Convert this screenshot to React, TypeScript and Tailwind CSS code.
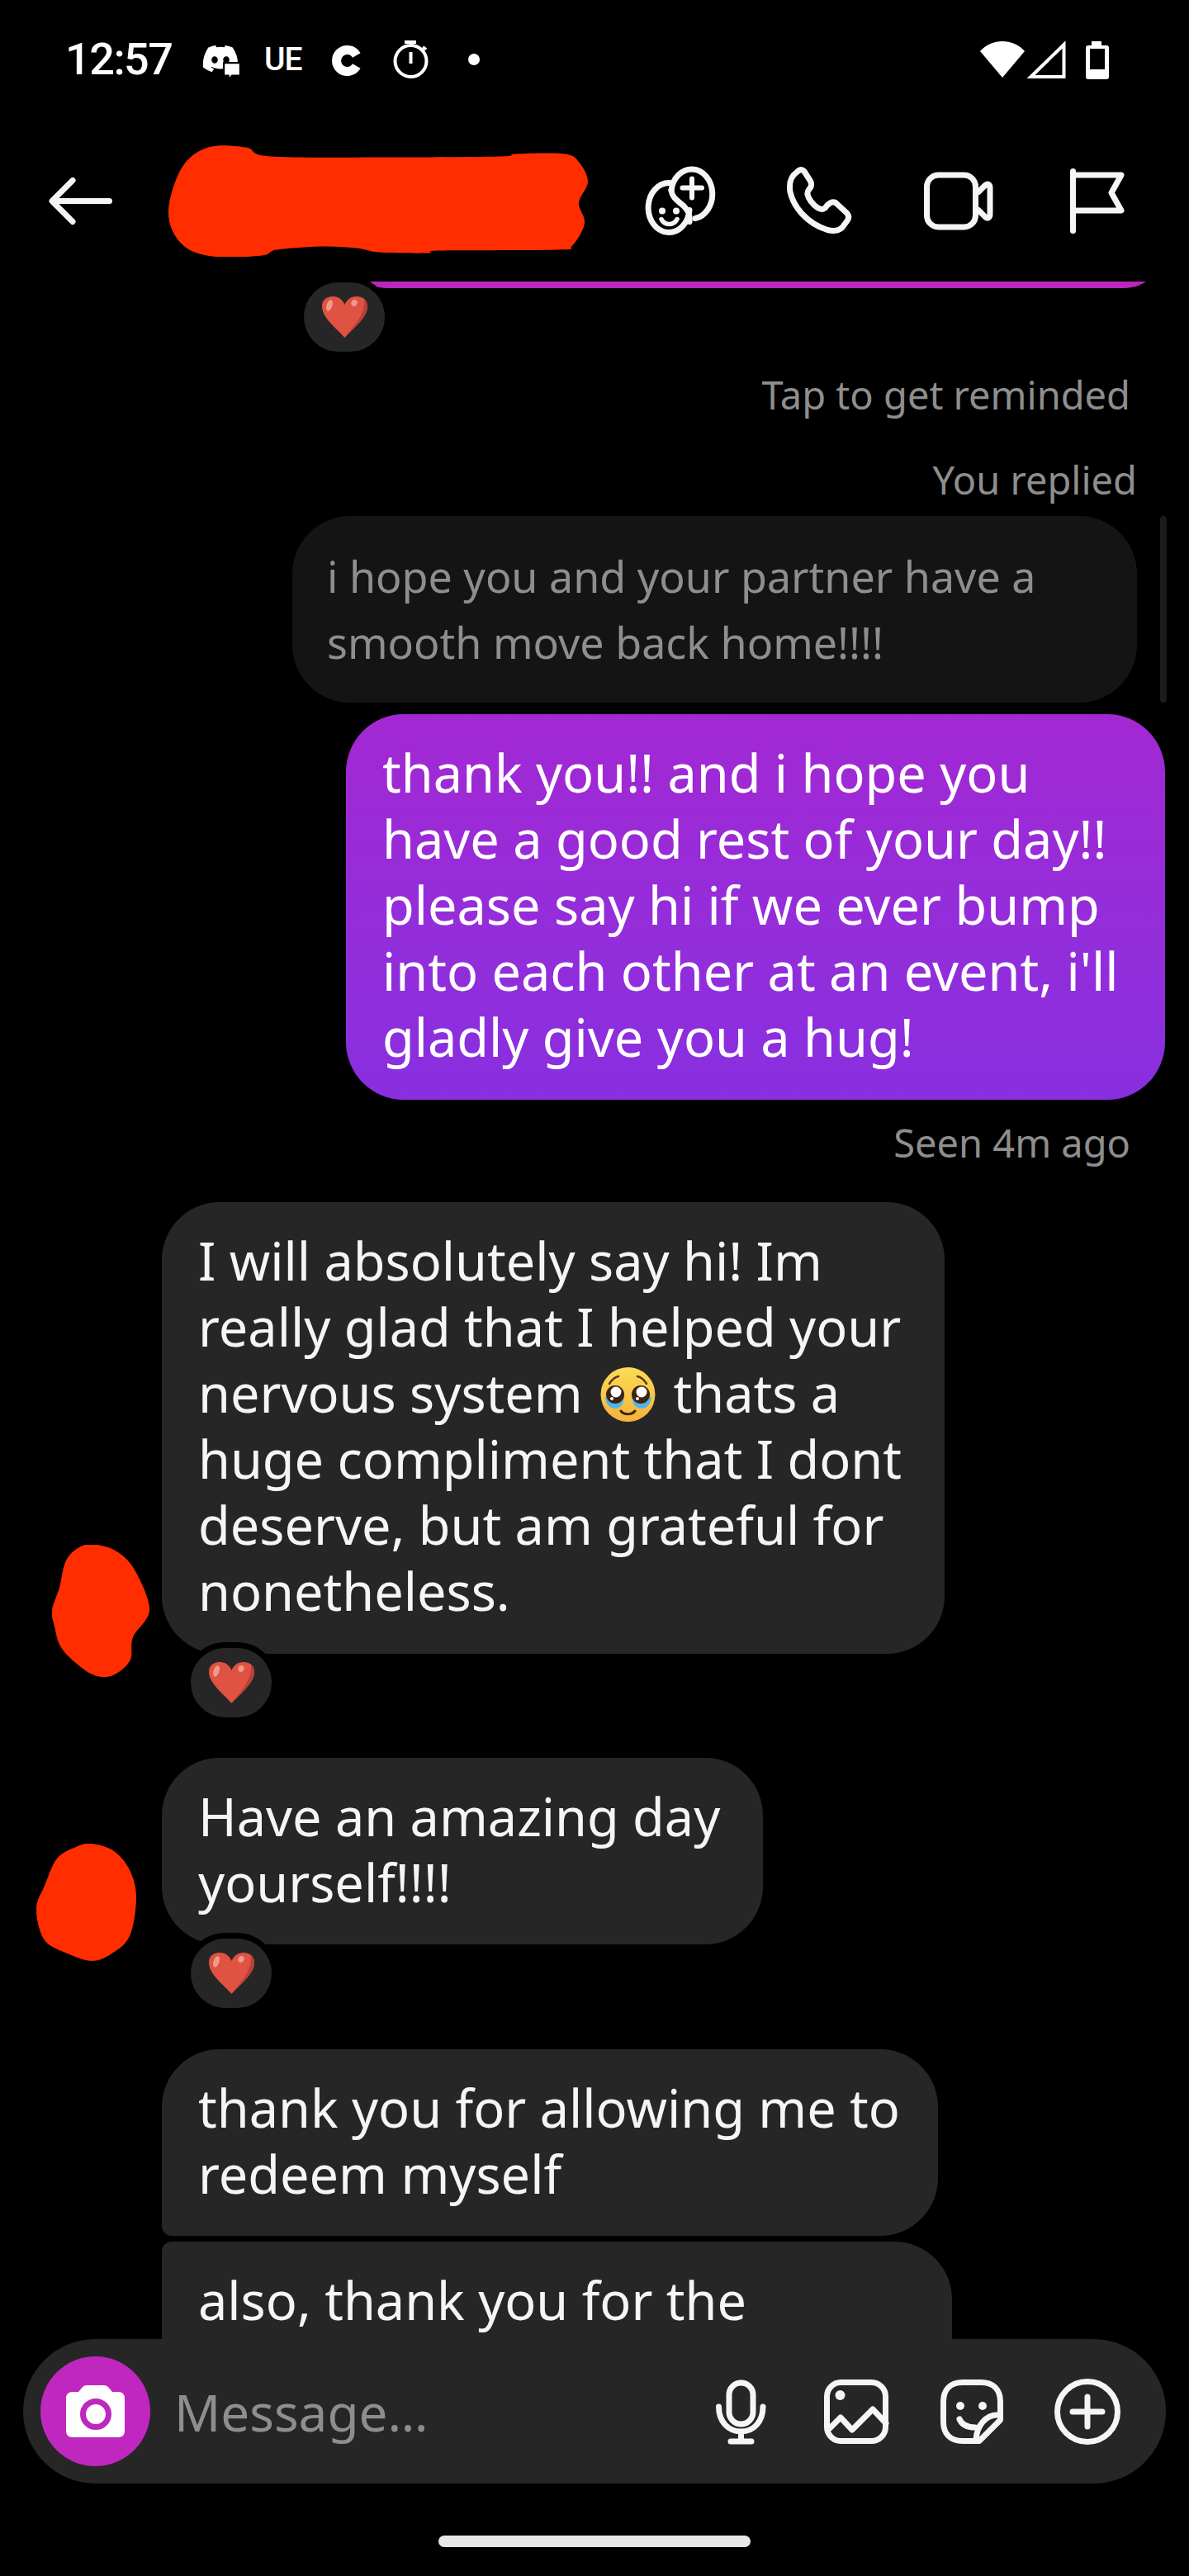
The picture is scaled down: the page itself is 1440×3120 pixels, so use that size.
import React from "react";
import { FaDiscord } from "react-icons/fa";

type P = [number, number];
function smooth(pts: P[]) {
  const n = pts.length;
  let d = `M${pts[0][0]} ${pts[0][1]}`;
  for (let i = 0; i < n; i++) {
    const p0 = pts[(i - 1 + n) % n], p1 = pts[i], p2 = pts[(i + 1) % n], p3 = pts[(i + 2) % n];
    const c1 = [p1[0] + (p2[0] - p0[0]) / 6, p1[1] + (p2[1] - p0[1]) / 6];
    const c2 = [p2[0] - (p3[0] - p1[0]) / 6, p2[1] - (p3[1] - p1[1]) / 6];
    d += ` C${c1[0]} ${c1[1]} ${c2[0]} ${c2[1]} ${p2[0]} ${p2[1]}`;
  }
  return d + " Z";
}

const headerBlob: P[] = [[252,178],[298,178],[328,189],[470,190],[606,189],[624,186],[684,186],[702,197],[712,220],[701,245],[708,270],[693,297],[675,302],[533,303],[519,306],[459,305],[432,300],[390,298],[335,302],[317,309],[257,310],[220,295],[204,257],[220,203]];
const avatarA: P[] = [[118,1871],[143,1880],[164,1903],[181,1950],[161,1983],[158,2010],[141,2027],[123,2031],[103,2023],[75,1997],[66,1970],[63,1950],[72,1923],[80,1890],[98,1873]];
const avatarB: P[] = [[111,2233],[138,2242],[157,2265],[165,2298],[157,2345],[134,2367],[111,2375],[84,2367],[54,2350],[44,2312],[54,2284],[69,2251],[92,2237]];

function Ico({ box, className, children }: { box: [number, number, number, number]; className?: string; children: React.ReactNode }) {
  return (
    <svg viewBox={box.join(" ")} width={box[2]} height={box[3]} className={"shrink-0 " + (className ?? "")} fill="none" stroke="#f5f5f5" strokeWidth={7} strokeLinecap="round" strokeLinejoin="round">
      {children}
    </svg>
  );
}

function Heart() {
  return (
    <svg viewBox="0 0 55 50" width={55} height={50}>
      <path d="M27.5 50 C17 38 0 26 0 12 C0 4 6 0 13 0 C20 0 25 4 27.5 10 C30 4 35 0 42 0 C49 0 55 4 55 12 C55 26 38 38 27.5 50 Z" fill="#e05241" />
      <path d="M27.5 50 C38 38 55 26 55 12 C55 8 53.5 5 51 3 C53 22 38 36 27.5 50 Z" fill="#b9403a" />
      <ellipse cx="9" cy="11" rx="3.5" ry="7" fill="#f09a8e" transform="rotate(18 9 11)" />
      <ellipse cx="39" cy="8" rx="3.5" ry="4" fill="#f09a8e" transform="rotate(30 39 8)" />
    </svg>
  );
}

function Reaction({ className }: { className?: string }) {
  return (
    <div className={"relative z-10 w-[112px] h-[98px] -mt-[14px] rounded-full border-[7px] border-black bg-[#262626] flex items-center justify-center " + (className ?? "")}>
      <Heart />
    </div>
  );
}

function PleadingFace() {
  return (
    <svg viewBox="0 0 69 66" width={69} height={66} className="inline-block align-[-11px] mx-[4px]">
      <defs>
        <linearGradient id="face" x1="0" y1="0" x2="0" y2="1">
          <stop offset="0" stopColor="#fbdc55" />
          <stop offset="1" stopColor="#f4b23c" />
        </linearGradient>
      </defs>
      <circle cx="34.5" cy="33" r="33" fill="url(#face)" />
      <path d="M12 20 C15 15 19 12 23 11 M57 20 C54 15 50 12 46 11" stroke="#5b3a1c" strokeWidth="2.5" fill="none" strokeLinecap="round" />
      <path d="M7 36 C8 45 13 50 19 50 C25 50 29 45 30 36 Z" fill="#52b3e8" />
      <path d="M39 36 C40 45 45 50 51 50 C57 50 62 45 63 36 Z" fill="#52b3e8" />
      <circle cx="19" cy="33" r="11" fill="#3d2410" />
      <circle cx="50" cy="33" r="11" fill="#3d2410" />
      <circle cx="20" cy="30" r="6.5" fill="#fff" />
      <circle cx="51" cy="30" r="6.5" fill="#fff" />
      <circle cx="15" cy="38" r="2" fill="#fff" />
      <circle cx="46" cy="38" r="2" fill="#fff" />
      <path d="M26 53 C30 58 39 58 43 53" stroke="#3d2410" strokeWidth="3" fill="none" strokeLinecap="round" />
    </svg>
  );
}

const bubbleText = "text-[63px] leading-[80px]";
const smallText = "text-[47px] leading-[60px] text-[#8e8e8e] text-right";

export default function App() {
  return (
    <div className="w-[1440px] h-[3120px] bg-black overflow-hidden flex flex-col font-['Noto_Sans',sans-serif]">
      {/* Status bar */}
      <div className="h-[144px] shrink-0 flex items-center text-white font-['Roboto',sans-serif]">
        <span className="ml-[79px] w-[128px] text-[54px] leading-[60px] font-medium tracking-[-1.5px] whitespace-nowrap">12:57</span>
        <div className="relative ml-[37px] w-[46px] h-[40px]">
          <FaDiscord size={46} color="#fff" className="-mt-[4px]" />
          <svg viewBox="0 0 20 20" width={22} height={22} className="absolute right-[-2px] bottom-[-5px]">
            <path d="M1 1 H19 V15 H10 L6 20 V15 H1 Z" fill="#fff" stroke="#000" strokeWidth="2" />
          </svg>
        </div>
        <span className="ml-[30px] text-[39px] leading-[40px] font-medium tracking-[-1px] w-[46px] whitespace-nowrap">UE</span>
        <Ico box={[400, 27, 41, 90]} className="ml-[34px]">
          <path d="M431.8 67 A13 13 0 1 0 431.8 80" stroke="#fff" strokeWidth="11" strokeLinecap="butt" />
        </Ico>
        <Ico box={[475, 27, 46, 90]} className="ml-[34px]">
          <circle cx="497.5" cy="74" r="19" stroke="#fff" strokeWidth="4" />
          <path d="M490 51 H504" stroke="#fff" strokeWidth="4" strokeLinecap="butt" />
          <path d="M497.5 63 V77" stroke="#fff" strokeWidth="4" strokeLinecap="butt" />
          <path d="M512 57 L516 60" stroke="#fff" strokeWidth="4" strokeLinecap="butt" />
        </Ico>
        <div className="ml-[46px] w-[14px] h-[14px] rounded-full bg-white" />
        <Ico box={[1185, 27, 58, 90]} className="ml-auto">
          <path d="M1214 94 L1187 62 C1194 54 1204 50 1214 50 C1224 50 1234 54 1241 62 Z" fill="#fff" stroke="none" />
        </Ico>
        <Ico box={[1244, 27, 48, 90]} className="ml-[1px]">
          <path d="M1248.5 93 L1288.5 54 V93 Z" stroke="#fff" strokeWidth="4" strokeLinecap="butt" strokeLinejoin="miter" />
        </Ico>
        <Ico box={[1313, 27, 32, 90]} className="ml-[21px] mr-[95px]">
          <path d="M1322 50 H1334 V55 H1340 Q1343 55 1343 58 V93 Q1343 96 1340 96 H1318 Q1315 96 1315 93 V58 Q1315 55 1318 55 H1322 Z M1320 59 V84 H1338 V59 Z" fill="#fff" stroke="none" fillRule="evenodd" />
        </Ico>
      </div>

      {/* Header */}
      <div className="h-[197px] shrink-0 flex items-center">
        <Ico box={[56, 197.5, 84, 90]} className="ml-[56px]">
          <path d="M132.5 243 H64 M88 218 L63 243 L88 268" />
        </Ico>
        <svg viewBox="204 174.5 508 136" width={508} height={136} className="ml-[64px] shrink-0">
          <path d={smooth(headerBlob)} fill="#ff2d00" />
        </svg>
        <Ico box={[778, 197.5, 92, 90]} className="ml-[66px]">
          <path d="M813 230 A25 30 0 1 1 842 264" />
          <path d="M811 221 A25 30 0 1 0 835 254" />
          <path d="M813 230 C814 240 822 243 828 249 C834 255 836 260 835 268" />
          <circle cx="802" cy="255" r="4" fill="#f5f5f5" stroke="none" />
          <circle cx="819" cy="255" r="4" fill="#f5f5f5" stroke="none" />
          <path d="M801 265 C805 273 816 273 820 265" strokeWidth="5.5" />
          <path d="M826.5 227 H850 M838 216 V239" strokeWidth="6" />
        </Ico>
        <Ico box={[950, 197.5, 84, 90]} className="ml-[80px]">
          <path d="M965 208 C958 213 955 220 957 232 C961 250 977 270 1002 278 C1010 280 1016 279 1020 275 L1026 267 C1029 263 1028 260 1025 257 L1012 245 C1008 243 1005 245 1002 248 C998 254 995 254 990 251 C984 247 979 240 978 235 C977 231 980 229 982 226 C983 223 983 221 981 218 L974 207 C971 204 968 205 965 208 Z" />
        </Ico>
        <Ico box={[1115, 197.5, 90, 90]} className="ml-[81px]">
          <rect x="1122.5" y="211.5" width="59" height="63" rx="14" />
          <path d="M1185 232 L1193 224 C1196 221 1199 223 1199 227 V259 C1199 263 1196 265 1193 262 L1185 254" />
        </Ico>
        <Ico box={[1293, 197.5, 72, 90]} className="ml-[88px]">
          <path d="M1299.5 207 V279 M1300 211.5 H1358 L1346 233 L1358 254.5 H1300" />
        </Ico>
      </div>

      {/* Messages */}
      <div className="relative flex-1 min-h-0 overflow-hidden text-[#f5f5f5]">
        <div className="absolute left-[1405px] top-[284px] w-[8px] h-[226px] rounded-full bg-[#1c1c1c]" />

        <div className="w-[992px] h-[100px] -mt-[92px] ml-[419px] rounded-[70px] bg-[#bb27bd]" />
        <Reaction className="ml-[361px]" />

        <div className={`${smallText} mt-[15px] mr-[71px]`}>Tap to get reminded</div>
        <div className={`${smallText} mt-[43px] mr-[63px]`}>You replied</div>

        <div className="mt-[14px] ml-[354px] w-[1023px] rounded-[70px] bg-[#141414] px-[42px] py-[33px] text-[#8e8e8e] text-[52px] leading-[80px]">
          i hope you and your partner have a<br />smooth move back home!!!!
        </div>

        <div className={`mt-[14px] ml-[419px] w-[992px] rounded-[70px] bg-gradient-to-b from-[#a228d3] to-[#882fe0] pl-[44px] pt-[31px] pb-[36px] text-white ${bubbleText}`}>
          thank you!! and i hope you<br />have a good rest of your day!!<br />please say hi if we ever bump<br />into each other at an event, i'll<br />gladly give you a hug!
        </div>

        <div className={`${smallText} mt-[22px] mr-[71px]`}>Seen 4m ago</div>

        <div className="mt-[42px] flex items-end pl-[63px]">
          <svg viewBox="63 1871 118 160" width={118} height={160} className="shrink-0 -mb-[28px]">
            <path d={smooth(avatarA)} fill="#ff2d00" />
          </svg>
          <div className={`ml-[15px] w-[948px] rounded-[70px] bg-[#262626] pl-[44px] pt-[31px] pb-[36px] ${bubbleText}`}>
            I will absolutely say hi! Im<br />really glad that I helped your<br />nervous system <PleadingFace /> thats a<br />huge compliment that I dont<br />deserve, but am grateful for<br />nonetheless.
          </div>
        </div>
        <Reaction className="ml-[224px]" />

        <div className="mt-[42px] flex items-end pl-[44px]">
          <svg viewBox="44 2233 121 142" width={121} height={142} className="shrink-0 -mb-[20px]">
            <path d={smooth(avatarB)} fill="#ff2d00" />
          </svg>
          <div className={`ml-[31px] w-[728px] rounded-[70px] bg-[#262626] pl-[44px] pt-[31px] pb-[35px] ${bubbleText}`}>
            Have an amazing day<br />yourself!!!!
          </div>
        </div>
        <Reaction className="ml-[224px]" />

        <div className={`mt-[43px] ml-[196px] w-[940px] rounded-[70px] rounded-bl-[12px] bg-[#262626] pl-[44px] pt-[31px] pb-[35px] ${bubbleText}`}>
          thank you for allowing me to<br />redeem myself
        </div>
        <div className={`mt-[7px] ml-[196px] w-[957px] rounded-[70px] rounded-tl-[12px] bg-[#262626] pl-[44px] pt-[31px] pb-[35px] ${bubbleText}`}>
          also, thank you for the<br />&nbsp;
        </div>
      </div>

      {/* Composer */}
      <div className="mx-[28px] h-[175px] shrink-0 rounded-full bg-[#262626] flex items-center">
        <div className="ml-[21px] w-[133px] h-[133px] rounded-full bg-[#bf27bf] shrink-0 flex items-center justify-center">
          <svg viewBox="80 2885 71 63" width={71} height={63}>
            <path d="M88 2893 H95 L100 2887 Q102 2885 105 2885 H126 Q129 2885 131 2887 L136 2893 H143 Q151 2893 151 2901 V2940 Q151 2948 143 2948 H88 Q80 2948 80 2940 V2901 Q80 2893 88 2893 Z" fill="#fff" />
            <circle cx="116" cy="2920" r="15.5" fill="#fff" stroke="#bf27bf" strokeWidth="7" />
          </svg>
        </div>
        <span className="ml-[29px] text-[62px] leading-[80px] text-[#8e8e8e] whitespace-nowrap">Message…</span>
        <Ico box={[863, 2882, 68, 84]} className="ml-auto">
          <rect x="883" y="2889" width="29" height="50" rx="14.5" />
          <path d="M870.5 2918 C870.5 2936 882 2948 897.5 2948 C913 2948 924 2936 924 2918 M897.5 2948 V2960 M885 2960 H910" />
        </Ico>
        <Ico box={[994, 2882, 86, 84]} className="ml-[63px]">
          <rect x="1001.5" y="2888.5" width="71" height="71" rx="17" />
          <circle cx="1017.5" cy="2904" r="6" fill="#f5f5f5" stroke="none" />
          <path d="M1005 2944 L1018 2931 L1032 2946 L1057 2921 L1073 2938" />
        </Ico>
        <Ico box={[1135, 2882, 84, 84]} className="ml-[55px]">
          <path d="M1166 2888.5 H1188 C1203 2888.5 1211.5 2897 1211.5 2912 V2934 L1186 2959.5 H1166 C1151 2959.5 1142.5 2951 1142.5 2936 V2912 C1142.5 2897 1151 2888.5 1166 2888.5 Z" />
          <path d="M1209 2928 C1195 2927 1183 2940 1182 2958" />
          <path d="M1162 2933 C1165 2940 1172 2943 1181 2943" />
          <circle cx="1163" cy="2917" r="5" fill="#f5f5f5" stroke="none" />
          <circle cx="1190" cy="2917" r="5" fill="#f5f5f5" stroke="none" />
        </Ico>
        <Ico box={[1273, 2880, 88, 88]} className="ml-[54px] mr-[51px]">
          <circle cx="1317" cy="2924" r="36.5" />
          <path d="M1299 2924 H1335 M1317 2906 V2942" />
        </Ico>
      </div>

      {/* Home indicator */}
      <div className="h-[112px] shrink-0 flex justify-center pt-[63px]">
        <div className="w-[378px] h-[14px] rounded-full bg-[#e8e8e8]" />
      </div>
    </div>
  );
}
